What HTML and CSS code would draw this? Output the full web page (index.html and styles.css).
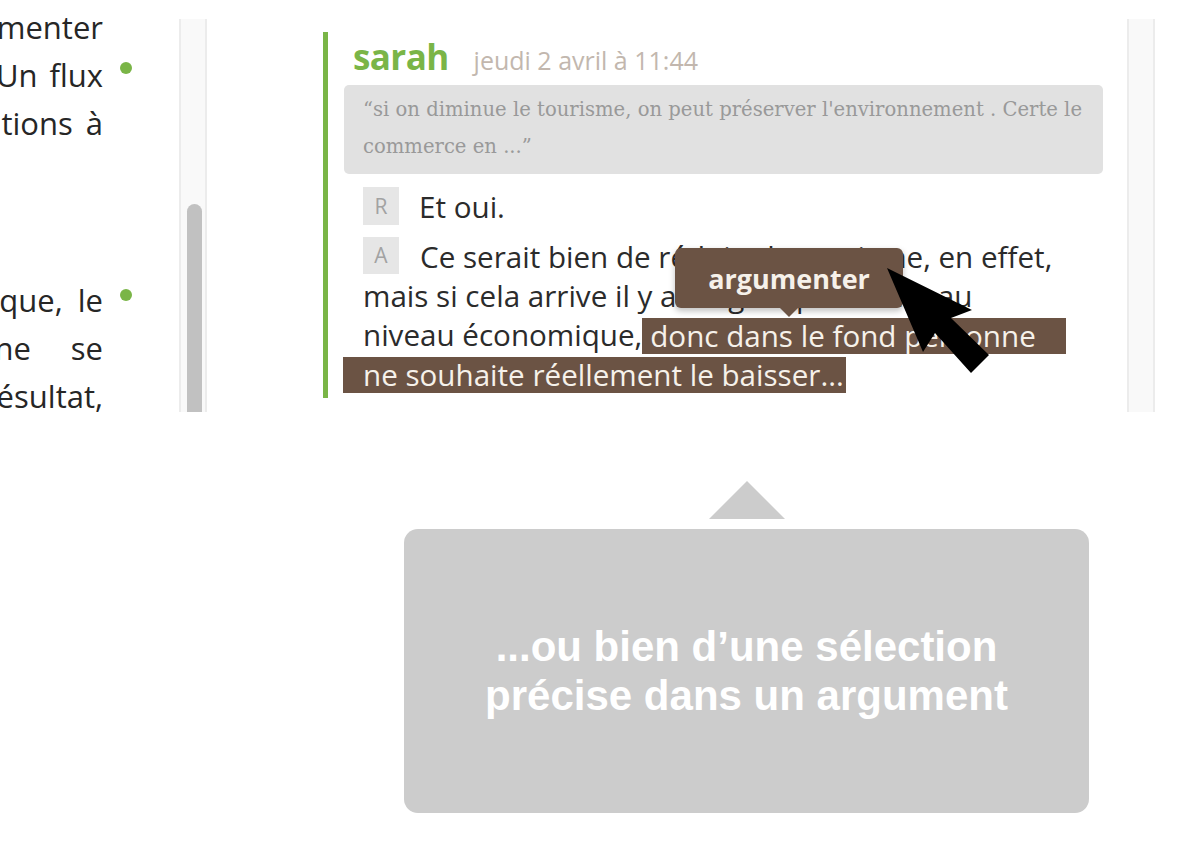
FILE: index.html
```html
<!DOCTYPE html>
<html lang="fr">
<head>
<meta charset="utf-8">
<title>Argumenter une sélection</title>
<link rel="stylesheet" href="styles.css">
</head>
<body>
<div class="shot">
  <div class="doc">
    <div class="para p1">
      <div class="ptext">
        <div class="ln"><span>augmenter</span></div>
        <div class="ln gap-f"><span>Un</span><span>flux</span></div>
        <div class="ln gap-s"><span>solutions</span><span>à</span></div>
      </div>
      <span class="dot"></span>
    </div>
    <div class="para p2">
      <div class="ptext">
        <div class="ln gap-m"><span>économique,</span><span>le</span></div>
        <div class="ln gap-l"><span>phénomène</span><span>se</span></div>
        <div class="ln"><span>résultat,</span></div>
      </div>
      <span class="dot"></span>
    </div>
  </div>
  <div class="track"><div class="thumb"></div></div>
  <div class="main">
    <article class="msg">
      <div class="head">
        <span class="name">sarah</span>
        <span class="date">jeudi 2 avril à 11:44</span>
      </div>
      <blockquote class="quote">“si on diminue le tourisme, on peut préserver l'environnement . Certe le<br>commerce en ...”</blockquote>
      <div class="row-r"><span class="badge">R</span><span class="rtext">Et oui.</span></div>
      <div class="arg">
        <div class="line"><span class="badge">A</span>Ce serait bien de réduire le tourisme, en effet,</div>
        <div class="line">mais si cela arrive il y a un gros problème au</div>
        <div class="line">niveau économique,<span class="sel s3">donc dans le fond personne</span></div>
        <div class="line"><span class="sel s4">ne souhaite réellement le baisser...</span></div>
      </div>
      <div class="tip">argumenter</div>
      <svg class="cursor" width="120" height="120" viewBox="0 0 120 120" aria-hidden="true">
        <polygon points="7,8 43,92 55,73 91,113 109,95 71,58 92,50" fill="#000"/>
      </svg>
    </article>
  </div>
  <div class="track"></div>
</div>
<div class="callout">
  <div class="tri"></div>
  <div class="box"><p>...ou bien d’une sélection<br>précise dans un argument</p></div>
</div>
</body>
</html>
```

FILE: styles.css
```css
body {
  margin: 0;
  background: #fff;
  font-family: "Open Sans", "Noto Sans", sans-serif;
}

.shot {
  display: flex;
  height: 412px;
  overflow: hidden;
}

/* left document column (cropped) */
.doc {
  width: 179px;
  flex: none;
  box-sizing: border-box;
  padding-top: 3px;
  font-size: 31px;
  line-height: 48px;
  color: #262626;
}
.para { display: flex; }
.para + .para { margin-top: 129px; }
.ptext { width: 103px; flex: none; }
.ln {
  display: flex;
  justify-content: flex-end;
  white-space: nowrap;
  gap: 9px;
}
.ln > span { flex: none; }
.ln.gap-f { gap: 12px; }
.ln.gap-s { gap: 13px; }
.ln.gap-m { gap: 15px; }
.ln.gap-l { gap: 40px; }
.dot {
  width: 12px;
  height: 12px;
  border-radius: 50%;
  background: #7ab547;
  margin-left: 17px;
  flex: none;
}
.p1 .dot { margin-top: 59px; }
.p2 .dot { margin-top: 13px; }

/* scrollbars */
.track {
  width: 28px;
  flex: none;
  margin-top: 19px;
  box-sizing: border-box;
  background: #f9f9f9;
  border-left: 2px solid #ececec;
  border-right: 2px solid #ececec;
}
.thumb {
  width: 15px;
  height: 260px;
  margin: 185px 0 0 6px;
  background: #c1c1c1;
  border-radius: 8px 8px 0 0;
}

/* main discussion */
.main { width: 920px; flex: none; }
.msg {
  position: relative;
  margin: 32px 24px 0 116px;
  height: 366px;
  border-left: 5px solid #7ab547;
  padding-left: 16px;
}
.head {
  display: flex;
  align-items: baseline;
  box-sizing: border-box;
  height: 53px;
  padding: 5px 0 0 9px;
}
.name {
  font-weight: 700;
  font-size: 35px;
  line-height: 40px;
  letter-spacing: -0.6px;
  color: #7ab547;
}
.date {
  margin-left: 25px;
  font-size: 25px;
  color: #c2b7ae;
}
.quote {
  margin: 0;
  background: #e1e1e1;
  border-radius: 5px;
  padding: 6px 19px 9px;
  font-family: "DejaVu Serif", serif;
  font-size: 19.6px;
  line-height: 37px;
  color: #999;
}

.row-r {
  display: flex;
  align-items: center;
  height: 38px;
  margin-top: 13px;
  margin-left: 19px;
  font-size: 29.6px;
  color: #2b2b2b;
}
.badge {
  display: inline-flex;
  align-items: center;
  justify-content: center;
  width: 36px;
  height: 38px;
  background: #e6e6e6;
  color: #a2a2a2;
  font-size: 21px;
  flex: none;
}
.rtext { margin-left: 20px; }

.arg {
  margin-top: 12px;
  margin-left: 19px;
  font-size: 29.6px;
  line-height: 39px;
  color: #2b2b2b;
  white-space: nowrap;
}
.arg .badge {
  vertical-align: top;
  height: 37px;
  line-height: 37px;
  margin-right: 21px;
}
.sel {
  display: inline-block;
  vertical-align: top;
  height: 36px;
  line-height: 36px;
  margin-top: 3px;
  background: #6b5344;
  color: #f6f1ea;
}
.s3 { padding: 0 30px 0 8px; }
.s4 { margin-left: -20px; padding: 0 2px 0 20px; }

.tip {
  position: absolute;
  left: 347px;
  top: 216px;
  width: 228px;
  height: 60px;
  display: flex;
  align-items: center;
  justify-content: center;
  background: #6b5344;
  border-radius: 6px;
  color: #f6f1ea;
  font-weight: 700;
  font-size: 27px;
  box-shadow: 0 3px 6px rgba(0, 0, 0, 0.25);
}
.tip::after {
  content: "";
  position: absolute;
  left: calc(50% - 9px);
  bottom: -9px;
  border-top: 9px solid #6b5344;
  border-left: 9px solid transparent;
  border-right: 9px solid transparent;
}
.cursor {
  position: absolute;
  left: 552px;
  top: 228px;
}

/* callout */
.callout {
  width: 685px;
  margin: 69px 0 0 404px;
}
.tri {
  width: 0;
  height: 0;
  margin: 0 auto;
  border-left: 38.5px solid transparent;
  border-right: 38.5px solid transparent;
  border-bottom: 38px solid #ccc;
}
.box {
  height: 284px;
  margin-top: 10px;
  display: flex;
  align-items: center;
  justify-content: center;
  text-align: center;
  background: #ccc;
  border-radius: 14px;
  color: #fff;
  font-family: "Liberation Sans", Arial, sans-serif;
  font-weight: 700;
  font-size: 42px;
  line-height: 49px;
}
.box p { margin: 0; }
```
